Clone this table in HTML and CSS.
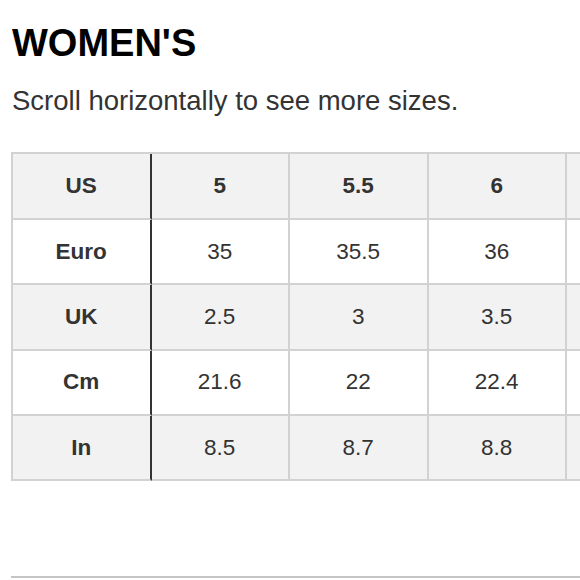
FILE: index.html
```html
<!DOCTYPE html>
<html lang="en">
<head>
<meta charset="utf-8">
<title>Women's sizes</title>
<link rel="stylesheet" href="styles.css">
</head>
<body>
<main class="page">
  <h1 class="title">WOMEN'S</h1>
  <p class="hint">Scroll horizontally to see more sizes.</p>
  <div class="scroller">
    <table class="sizes">
      <tbody>
        <tr class="shade head">
          <th class="label">US</th><td>5</td><td>5.5</td><td>6</td><td class="more"></td>
        </tr>
        <tr>
          <th class="label">Euro</th><td>35</td><td>35.5</td><td>36</td><td class="more"></td>
        </tr>
        <tr class="shade">
          <th class="label">UK</th><td>2.5</td><td>3</td><td>3.5</td><td class="more"></td>
        </tr>
        <tr>
          <th class="label">Cm</th><td>21.6</td><td>22</td><td>22.4</td><td class="more"></td>
        </tr>
        <tr class="shade">
          <th class="label">In</th><td>8.5</td><td>8.7</td><td>8.8</td><td class="more"></td>
        </tr>
      </tbody>
    </table>
  </div>
  <hr class="rule">
</main>
</body>
</html>
```
FILE: styles.css
```css
html, body {
  margin: 0;
  padding: 0;
  background: #fff;
  overflow: hidden;
}

.page {
  padding: 21px 0 0 11px;
  font-family: "Liberation Sans", Arial, sans-serif;
  color: #333;
}

.title {
  margin: 0 0 0 1px;
  font-size: 38px;
  line-height: 44px;
  font-weight: 700;
  color: #000;
}

.hint {
  margin: 20px 0 0 1px;
  font-size: 27.5px;
  line-height: 32px;
  color: #333;
}

.scroller {
  margin-top: 35px;
  overflow: hidden;
}

.sizes {
  border-collapse: separate;
  border-spacing: 0;
  border-top: 2px solid #d2d2d2;
  border-left: 2px solid #d2d2d2;
  table-layout: fixed;
  width: max-content;
}

.sizes th,
.sizes td {
  width: 136.5px;
  height: 63.3px;
  padding: 0;
  text-align: center;
  vertical-align: middle;
  font-size: 22.5px;
  color: #333;
  border-right: 2px solid #d2d2d2;
  border-bottom: 2px solid #d2d2d2;
  background: #fff;
}

.sizes .head th,
.sizes .head td {
  height: 64px;
}

.sizes .label {
  font-weight: 700;
  border-right-color: #333;
}

.sizes .head td {
  font-weight: 700;
}

.sizes .shade th,
.sizes .shade td {
  background: #f2f2f2;
}

.rule {
  margin: 95px 0 0 0;
  border: 0;
  height: 2px;
  background: #c4c4c4;
}
```
